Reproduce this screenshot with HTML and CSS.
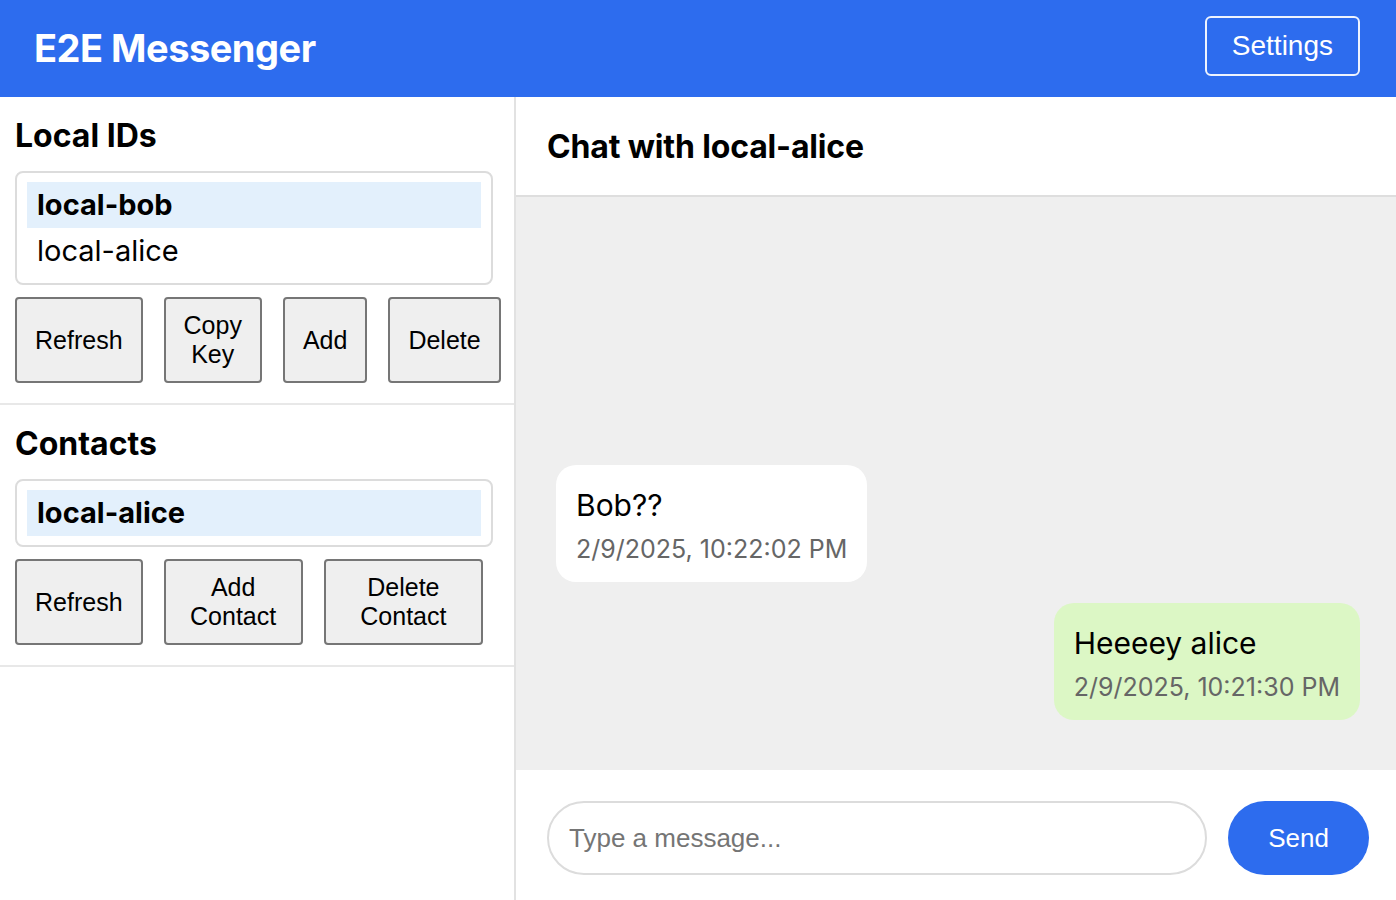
FILE: index.html
```html
<!DOCTYPE html>
<html lang="en">
<head>
<meta charset="utf-8">
<title>E2E Messenger</title>
<link rel="stylesheet" href="styles.css">
</head>
<body>
<header class="topbar">
  <h1 class="brand">E2E Messenger</h1>
  <button class="settings-btn">Settings</button>
</header>
<div class="layout">
  <aside class="sidebar">
    <section class="panel">
      <h2 class="panel-title">Local IDs</h2>
      <ul class="id-list">
        <li class="id-item selected">local-bob</li>
        <li class="id-item">local-alice</li>
      </ul>
      <div class="btn-row">
        <button class="btn">Refresh</button>
        <button class="btn">Copy Key</button>
        <button class="btn">Add</button>
        <button class="btn">Delete</button>
      </div>
    </section>
    <section class="panel">
      <h2 class="panel-title">Contacts</h2>
      <ul class="id-list">
        <li class="id-item selected">local-alice</li>
      </ul>
      <div class="btn-row">
        <button class="btn">Refresh</button>
        <button class="btn">Add Contact</button>
        <button class="btn">Delete Contact</button>
      </div>
    </section>
  </aside>
  <main class="chat">
    <div class="chat-header">
      <h2 class="chat-title">Chat with local-alice</h2>
    </div>
    <div class="messages">
      <div class="bubble incoming">
        <div class="bubble-text">Bob??</div>
        <div class="bubble-time">2/9/2025, 10:22:02 PM</div>
      </div>
      <div class="bubble outgoing">
        <div class="bubble-text">Heeeey alice</div>
        <div class="bubble-time">2/9/2025, 10:21:30 PM</div>
      </div>
    </div>
    <div class="composer">
      <input class="composer-input" type="text" placeholder="Type a message...">
      <button class="send-btn">Send</button>
    </div>
  </main>
</div>
</body>
</html>
```

FILE: styles.css
```css
* { box-sizing: border-box; }

html, body {
  margin: 0;
  padding: 0;
  height: 100%;
}

body {
  font-family: Inter, "Noto Sans", sans-serif;
  color: #000;
  background: #fff;
  display: flex;
  flex-direction: column;
  height: 100vh;
  overflow: hidden;
}

.topbar {
  flex: 0 0 97px;
  background: #2d6cee;
  display: flex;
  align-items: flex-start;
  justify-content: space-between;
  padding: 16px 36px 0 34px;
}

.brand {
  margin: 9px 0 0;
  color: #fff;
  font-size: 38px;
  font-weight: 700;
  line-height: 46px;
  letter-spacing: -0.5px;
}

.settings-btn {
  height: 60px;
  padding: 0 25px;
  background: transparent;
  border: 2px solid rgba(255, 255, 255, 0.92);
  border-radius: 6px;
  color: #fff;
  font-family: "Liberation Sans", Arial, sans-serif;
  font-size: 28px;
}

.layout {
  flex: 1;
  display: flex;
  min-height: 0;
}

.sidebar {
  flex: 0 0 516px;
  width: 516px;
  min-width: 0;
  border-right: 2px solid #e2e2e2;
  display: flex;
  flex-direction: column;
}

.panel {
  padding: 20px 21px 20px 15px;
  border-bottom: 2px solid #e8e8e8;
}

.panel-title {
  margin: 0 0 16px;
  font-size: 32px;
  font-weight: 700;
  line-height: 38px;
}

.id-list {
  list-style: none;
  margin: 0 0 12px;
  padding: 9px 10px;
  border: 2px solid #dcdcdc;
  border-radius: 8px;
}

.id-item {
  height: 46px;
  line-height: 46px;
  padding: 0 10px;
  font-size: 29px;
}

.id-item.selected {
  background: #e3f0fc;
  font-weight: 700;
}

.btn-row {
  display: flex;
  gap: 21px;
  margin-right: 10px;
}

.btn {
  font-family: "Liberation Sans", Arial, sans-serif;
  font-size: 25px;
  line-height: 29px;
  padding: 12px 18px;
  background: #efefef;
  border: 2px solid #767676;
  border-radius: 4px;
  color: #000;
}

.chat {
  flex: 1;
  display: flex;
  flex-direction: column;
  min-width: 0;
}

.chat-header {
  padding: 30px 30px 29px 31px;
  border-bottom: 2px solid #dedede;
}

.chat-title {
  margin: 0;
  font-size: 32px;
  font-weight: 700;
  line-height: 39px;
  letter-spacing: -0.15px;
}

.messages {
  flex: 1;
  background: #efefef;
  display: flex;
  flex-direction: column;
  justify-content: flex-end;
  gap: 21px;
  padding: 20px 36px 50px 40px;
}

.bubble {
  padding: 20px 20px 17px;
  border-radius: 20px;
  max-width: 70%;
}

.bubble.incoming {
  align-self: flex-start;
  background: #fff;
}

.bubble.outgoing {
  align-self: flex-end;
  background: #dcf7c5;
}

.bubble-text {
  font-size: 30px;
  line-height: 40px;
}

.bubble-time {
  margin-top: 8px;
  font-size: 25px;
  line-height: 32px;
  color: #666;
}

.composer {
  flex: 0 0 130px;
  display: flex;
  gap: 21px;
  padding: 31px 27px 25px 31px;
  background: #fff;
}

.composer-input {
  flex: 1;
  height: 74px;
  border: 2px solid #dcdcdc;
  border-radius: 37px;
  padding: 0 20px;
  font-family: "Liberation Sans", Arial, sans-serif;
  font-size: 26px;
  outline: none;
}

.composer-input::placeholder {
  color: #757575;
}

.send-btn {
  flex: 0 0 141px;
  height: 74px;
  border: none;
  border-radius: 37px;
  background: #2d6cee;
  color: #fff;
  font-family: "Liberation Sans", Arial, sans-serif;
  font-size: 26px;
}
```
